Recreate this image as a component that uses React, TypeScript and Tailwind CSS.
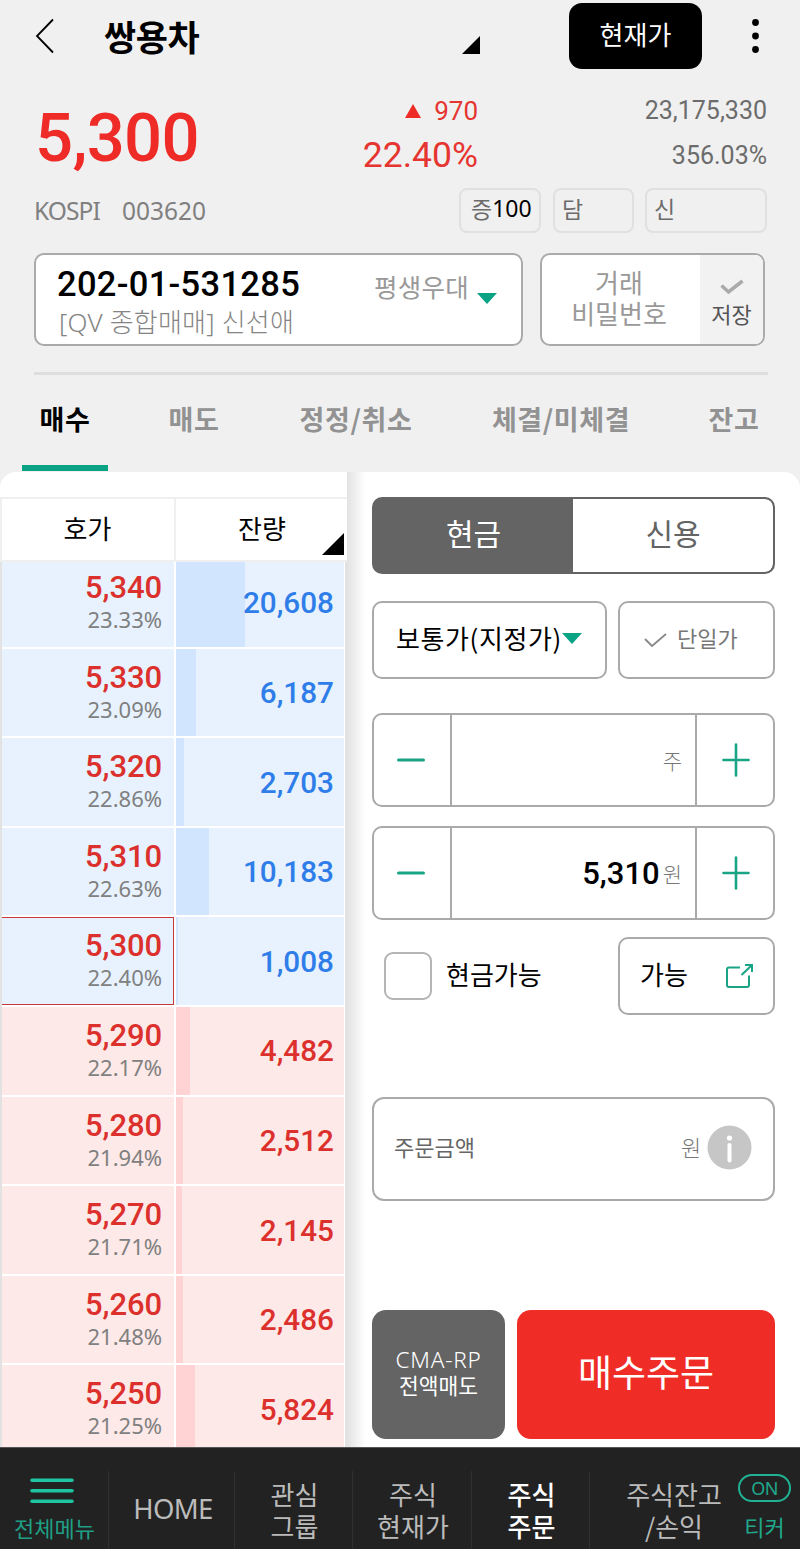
import { useState } from 'react'

interface Quote {
  price: string
  rate: string
  qty: string
  bar: number
  side: 'ask' | 'bid'
  current?: boolean
}

const quotes: Quote[] = [
  { price: '5,340', rate: '23.33%', qty: '20,608', bar: 69, side: 'ask' },
  { price: '5,330', rate: '23.09%', qty: '6,187', bar: 20, side: 'ask' },
  { price: '5,320', rate: '22.86%', qty: '2,703', bar: 8, side: 'ask' },
  { price: '5,310', rate: '22.63%', qty: '10,183', bar: 33, side: 'ask' },
  { price: '5,300', rate: '22.40%', qty: '1,008', bar: 2, side: 'ask', current: true },
  { price: '5,290', rate: '22.17%', qty: '4,482', bar: 14, side: 'bid' },
  { price: '5,280', rate: '21.94%', qty: '2,512', bar: 7, side: 'bid' },
  { price: '5,270', rate: '21.71%', qty: '2,145', bar: 6, side: 'bid' },
  { price: '5,260', rate: '21.48%', qty: '2,486', bar: 7, side: 'bid' },
  { price: '5,250', rate: '21.25%', qty: '5,824', bar: 19, side: 'bid' },
]

function CornerMark({ size }: { size: number }) {
  return (
    <svg width={size} height={size} viewBox="0 0 10 10">
      <path d="M10 0V10H0Z" fill="#000" />
    </svg>
  )
}

function DownArrow() {
  return (
    <svg className="shrink-0" width="20" height="11" viewBox="0 0 20 11">
      <path d="M0 0H20L10 11Z" fill="#0aa384" />
    </svg>
  )
}

function Header() {
  return (
    <header className="flex h-[72px] items-start">
      <button type="button" aria-label="뒤로" className="mt-[18px] ml-[35px]">
        <svg width="20" height="36" viewBox="0 0 20 36" fill="none" stroke="#000" strokeWidth="1.800">
          <path d="M18 1.500L2 18L18 34.500" />
        </svg>
      </button>
      <h1 className="mt-[18px] ml-[49px] w-[358px] text-[35px] leading-[36px] font-bold tracking-[-0.5px] text-black">
        쌍용차
      </h1>
      <div className="mt-[36px] w-[107px]">
        <CornerMark size={18} />
      </div>
      <button
        type="button"
        className="mt-[3px] h-[66px] w-[133px] rounded-[13px] bg-black pb-[5px] text-[26px] leading-none text-white"
      >
        현재가
      </button>
      <button type="button" aria-label="더보기" className="mt-[18px] ml-[49px]">
        <svg width="9" height="36" viewBox="0 0 9 36" fill="#000">
          <circle cx="4.500" cy="4.500" r="3.400" />
          <circle cx="4.500" cy="18" r="3.400" />
          <circle cx="4.500" cy="31.500" r="3.400" />
        </svg>
      </button>
    </header>
  )
}

function PriceSummary() {
  return (
    <section className="flex h-[116px] justify-between pr-[33px] pl-[35px] font-[Roboto]">
      <strong className="w-[240px] pt-[26px] text-[67px] leading-[80px] font-medium tracking-[-0.7px] text-[#ee2b27]">
        5,300
      </strong>
      <div className="flex w-[203px] flex-col items-end pt-[23px] text-[#e63530]">
        <div className="flex items-center gap-[13px] text-[26px] leading-[32px]">
          <svg width="16" height="14" viewBox="0 0 16 14">
            <path d="M8 0L16 14H0Z" fill="#ee2b27" />
          </svg>
          970
        </div>
        <div className="mt-[6px] text-[35.500px] leading-[44px]">22.40%</div>
      </div>
      <div className="flex w-[289px] flex-col items-end pt-[23px] text-[25px] leading-[32px] text-[#6c6c6c]">
        <div>23,175,330</div>
        <div className="mt-[13px]">356.03%</div>
      </div>
    </section>
  )
}

function StockTags() {
  return (
    <div className="flex h-[65px] items-start pl-[34px] text-[23px] leading-none text-[#6c6c6c]">
      <div className="mt-[11px] flex w-[425px] font-['Noto_Sans'] text-[24.500px] text-[#808080]">
        <span className="w-[88px] tracking-[-0.9px]">KOSPI</span>
        <span>003620</span>
      </div>
      <div className="flex h-[45px] w-[82px] items-center rounded-[8px] border-2 border-[#e0e0e0] pb-[4px] pl-[10px]">
        증<span className="font-['Noto_Sans'] text-black">100</span>
      </div>
      <div className="ml-[12px] flex h-[45px] w-[81px] items-center rounded-[8px] border-2 border-[#e0e0e0] pb-[4px] pl-[7px]">
        담
      </div>
      <div className="ml-[11px] flex h-[45px] w-[122px] items-center rounded-[8px] border-2 border-[#e0e0e0] pb-[4px] pl-[7px]">
        신
      </div>
    </div>
  )
}

function Account() {
  return (
    <section className="mr-[32px] ml-[34px] flex h-[122px] items-start gap-[17px] border-b-[3px] border-[#dedede]">
      <div className="flex h-[93px] w-[489px] rounded-[10px] border-2 border-[#aaa] bg-white">
        <div className="w-[338px] pl-[21px]">
          <div className="pt-[9px] font-[Roboto] text-[34.500px] leading-[40px] font-medium tracking-[0.3px] text-black">
            202-01-531285
          </div>
          <div className="pl-[2px] font-['Noto_Sans','Noto_Sans_CJK_KR',sans-serif] text-[26px] leading-[36px] font-light tracking-[0.2px] whitespace-nowrap text-[#848484]">
            [QV 종합매매] 신선애
          </div>
        </div>
        <div className="pt-[17px] text-[25.500px] leading-[28px] tracking-[0.3px] text-[#999]">평생우대</div>
        <div className="mt-[38px] ml-[8px]">
          <DownArrow />
        </div>
      </div>
      <div className="flex h-[93px] w-[225px] overflow-hidden rounded-[10px] border-2 border-[#aaa] bg-white">
        <div className="w-[158px] pt-[11px] pr-[4px] text-center text-[26px] leading-[31px] text-[#999]">
          거래
          <br />
          비밀번호
        </div>
        <div className="flex flex-1 flex-col items-center bg-[#f2f2f2] pt-[24px] text-[22px] leading-[24px] text-[#555]">
          <svg width="24" height="16" viewBox="0 0 24 16" fill="none" stroke="#aaa" strokeWidth="3.600">
            <path d="M1.500 6.500L8.500 13L22.500 2" />
          </svg>
          <span className="mt-[6px]">저장</span>
        </div>
      </div>
    </section>
  )
}

const tabs = [
  { label: '매수', box: 'w-[86px]' },
  { label: '매도', box: 'ml-[43px] w-[86px]' },
  { label: '정정/취소', box: 'ml-[43px] w-[152px]' },
  { label: '체결/미체결', box: 'ml-[38px] w-[182px]' },
  { label: '잔고', box: 'ml-[39px] w-[86px]' },
]

function OrderTabs() {
  const [active, setActive] = useState('매수')
  return (
    <nav className="flex h-[97px] pb-px pl-[22px]">
      {tabs.map((tab) => (
        <button
          key={tab.label}
          type="button"
          onClick={() => setActive(tab.label)}
          className={`${tab.box} shrink-0 border-b-[6px] pb-[3px] text-[27px] leading-none font-bold tracking-[0.6px] whitespace-nowrap ${
            active === tab.label ? 'border-[#0aa384] text-black' : 'border-transparent text-[#929292]'
          }`}
        >
          {tab.label}
        </button>
      ))}
    </nav>
  )
}

function QuoteRow({ quote }: { quote: Quote }) {
  const ask = quote.side === 'ask'
  return (
    <div className="flex h-[89.600px] shrink-0 gap-[2px] pt-[2px]">
      <div
        className={`flex w-[172px] flex-col items-end border-y border-r pt-[10px] pr-[11px] ${
          ask ? 'bg-[#e7f2fe]' : 'bg-[#fde9e8]'
        } ${quote.current ? 'border-[#c8393c]' : 'border-transparent'}`}
      >
        <div className="font-[Roboto] text-[31px] leading-[36px] font-medium tracking-[-0.1px] text-[#dc302d]">
          {quote.price}
        </div>
        <div className="font-['Noto_Sans'] text-[22px] leading-[27px] text-[#808080]">{quote.rate}</div>
      </div>
      <div className={`flex w-[168px] items-center ${ask ? 'bg-[#e7f2fe]' : 'bg-[#fde9e8]'}`}>
        <div
          className={`h-full shrink-0 ${ask ? 'bg-[#d1e5fe]' : 'bg-[#ffd3d3]'}`}
          style={{ width: quote.bar }}
        />
        <div
          className={`-ml-[4px] flex-1 pt-[1px] pr-[10px] text-right font-[Roboto] text-[29.700px] leading-none font-medium ${
            ask ? 'text-[#2f7de9]' : 'text-[#dc302d]'
          }`}
        >
          {quote.qty}
        </div>
      </div>
    </div>
  )
}

function QuoteBoard() {
  return (
    <div className="flex w-[347px] flex-col overflow-hidden rounded-tl-[16px] bg-white">
      <div className="mt-[25px] flex h-[65px] shrink-0 border-y-2 border-l-2 border-[#efefef] text-[26px] leading-none text-black">
        <div className="flex w-[174px] items-center justify-center border-r-2 border-[#efefef] pr-[1px] pb-[4px]">호가</div>
        <div className="flex flex-1 items-end">
          <span className="flex-1 self-center pb-[4px] pl-[62px]">잔량</span>
          <div className="mr-[3px] mb-[5px]">
            <CornerMark size={22} />
          </div>
        </div>
      </div>
      <div className="flex flex-1 flex-col overflow-hidden border-r-2 border-l-2 border-[#e2e2e2]">
        <div className="-mt-[5px] flex flex-col">
          {quotes.map((quote) => (
            <QuoteRow key={quote.price} quote={quote} />
          ))}
        </div>
      </div>
    </div>
  )
}

function Stepper({ value, unit }: { value?: string; unit: string }) {
  return (
    <div className="flex h-[94px] rounded-[10px] border-2 border-[#aaa]">
      <button
        type="button"
        aria-label="감소"
        className="flex w-[78px] items-center justify-center border-r-2 border-[#aaa] pr-[2px]"
      >
        <svg width="28" height="34" viewBox="0 0 28 34" stroke="#1aa486" strokeWidth="3" strokeLinecap="round">
          <path d="M1.500 17H26.500" />
        </svg>
      </button>
      <div className="flex w-[243px] items-center justify-end pt-[1px] pr-[13px]">
        <span className="font-[Roboto] text-[31px] leading-none font-medium text-black">{value}</span>
        <span className="ml-[3px] text-[21px] leading-none font-light text-[#777]">{unit}</span>
      </div>
      <button
        type="button"
        aria-label="증가"
        className="flex flex-1 items-center justify-center border-l-2 border-[#aaa] pl-[1px]"
      >
        <svg width="28" height="34" viewBox="0 0 28 34" stroke="#1aa486" strokeWidth="2.600" strokeLinecap="round">
          <path d="M1.500 17H26.500M14 1.500V32.500" />
        </svg>
      </button>
    </div>
  )
}

function OrderForm() {
  return (
    <div className="flex w-[453px] flex-col rounded-tr-[16px] bg-white bg-linear-to-r from-[#e2e2e2] from-0% via-white via-4% to-white pt-[25px] pr-[25px] pl-[25px]">
      <div className="flex h-[77px] overflow-hidden rounded-[10px] border-2 border-[#646464] bg-[#646464] text-[30px] leading-none">
        <button type="button" className="w-[199px] pb-[7px] text-white">
          현금
        </button>
        <button type="button" className="flex-1 rounded-r-[8px] bg-white pb-[7px] text-[#646464]">
          신용
        </button>
      </div>

      <div className="mt-[27px] flex h-[78px] gap-[11px]">
        <button
          type="button"
          className="flex w-[235px] items-center rounded-[10px] border-2 border-[#aaa] pb-[4px] pl-[22px] text-[26px] leading-none tracking-[0.6px] whitespace-nowrap text-black"
        >
          보통가(지정가)
          <DownArrow />
        </button>
        <button
          type="button"
          className="flex flex-1 items-center rounded-[10px] border-2 border-[#aaa] pl-[24px] text-[22px] leading-none text-[#777]"
        >
          <svg width="23" height="16" viewBox="0 0 23 16" fill="none" stroke="#888" strokeWidth="1.800">
            <path d="M1 7L8 14L22 2" />
          </svg>
          <span className="ml-[10px] pb-[6px]">단일가</span>
        </button>
      </div>

      <div className="mt-[34px]">
        <Stepper unit="주" />
      </div>
      <div className="mt-[19px]">
        <Stepper value="5,310" unit="원" />
      </div>

      <div className="mt-[17px] flex h-[78px] items-center text-[26px] leading-none text-black">
        <span className="ml-[12px] size-[48px] rounded-[9px] border-2 border-[#b4b4b4]" />
        <span className="ml-[14px] flex-1 pb-[5px]">현금가능</span>
        <button
          type="button"
          className="flex h-[78px] w-[157px] items-center rounded-[10px] border-2 border-[#aaa] pl-[20px] leading-none"
        >
          <span className="pb-[5px]">가능</span>
          <svg
            className="ml-[37px]"
            width="28"
            height="26"
            viewBox="0 0 28 26"
            fill="none"
            stroke="#1aa486"
            strokeWidth="2"
          >
            <path d="M15 4.500H4Q2 4.500 2 6.500V22Q2 24 4 24H22Q24 24 24 22V12.500" />
            <path d="M16.500 12L27 2M20 2H27V9" />
          </svg>
        </button>
      </div>

      <div className="mt-[82px] flex h-[104px] items-center rounded-[12px] border-2 border-[#aaa] pb-[4px] pl-[20px] text-[22px] leading-none">
        <span className="w-[287px] pb-[2px] text-[#666]">주문금액</span>
        <span className="w-[26px] pb-[2px] font-light text-[#777]">원</span>
        <svg width="45" height="45" viewBox="0 0 45 45">
          <circle cx="22.500" cy="22.500" r="22" fill="#c6c6c6" />
          <circle cx="22.500" cy="13" r="2.600" fill="#fff" />
          <path d="M22.500 20V35.500" stroke="#fff" strokeWidth="4" strokeLinecap="round" />
        </svg>
      </div>

      <div className="mt-[109px] flex h-[129px] gap-[12px] text-white">
        <button
          type="button"
          className="w-[133px] rounded-[14px] bg-[#646464] pb-[6px] text-[21.500px] leading-[25px]"
        >
          <span className="font-['Noto_Sans'] text-[22.500px] font-light tracking-[0.8px]">CMA-RP</span>
          <br />
          전액매도
        </button>
        <button type="button" className="flex-1 rounded-[14px] bg-[#f02c27] pb-[6px] text-[37px] leading-none">
          매수주문
        </button>
      </div>
    </div>
  )
}

function BottomNav() {
  return (
    <footer className="flex h-[102px] border-t border-[#555] bg-[#222] text-[26px] leading-[32px] text-[#bbb]">
      <button type="button" className="flex w-[108px] flex-col items-center pt-[30px] text-[22px] leading-[24px] text-[#1f9f84]">
        <svg className="mr-[4px]" width="44" height="26" viewBox="0 0 44 26" stroke="#20c3a2" strokeWidth="3.600" strokeLinecap="round">
          <path d="M2 2.200H42M2 12.800H42M2 23.300H42" />
        </svg>
        <span className="mt-[11px] ml-[1px] whitespace-nowrap">전체메뉴</span>
      </button>
      <div className="mt-[23px] flex flex-1">
        <button
          type="button"
          className="w-[126px] border-l border-[#303030] pb-[3px] pl-[3px] font-['Noto_Sans'] text-[27.500px] tracking-[-0.7px]"
        >
          HOME
        </button>
        <button type="button" className="w-[118px] border-l border-[#303030] pl-[2px]">
          관심
          <br />
          그룹
        </button>
        <button type="button" className="w-[119px] border-l border-[#303030] pl-[2px]">
          주식
          <br />
          현재가
        </button>
        <button type="button" className="w-[118px] border-l border-[#303030] pl-[2px] font-medium text-white">
          주식
          <br />
          주문
        </button>
        <button type="button" className="w-[149px] border-l border-[#303030] pl-[20px]">
          주식잔고
          <br />
          /손익
        </button>
      </div>
      <button type="button" className="mr-[9px] flex w-[53px] flex-col items-center pt-[26px] text-[22px] leading-[24px] text-[#20a88c]">
        <span className="flex h-[28px] w-[53px] items-center justify-center rounded-full border-2 border-[#20b193] font-['Noto_Sans'] text-[18px] leading-none tracking-[-0.5px]">
          ON
        </span>
        <span className="mt-[12px]">티커</span>
      </button>
    </footer>
  )
}

export default function App() {
  return (
    <div className="flex h-[1549px] w-[800px] flex-col overflow-hidden bg-[#f0f0f0] font-['Noto_Sans_CJK_KR',sans-serif]">
      <Header />
      <PriceSummary />
      <StockTags />
      <Account />
      <OrderTabs />
      <main className="flex h-[975px]">
        <QuoteBoard />
        <OrderForm />
      </main>
      <BottomNav />
    </div>
  )
}
